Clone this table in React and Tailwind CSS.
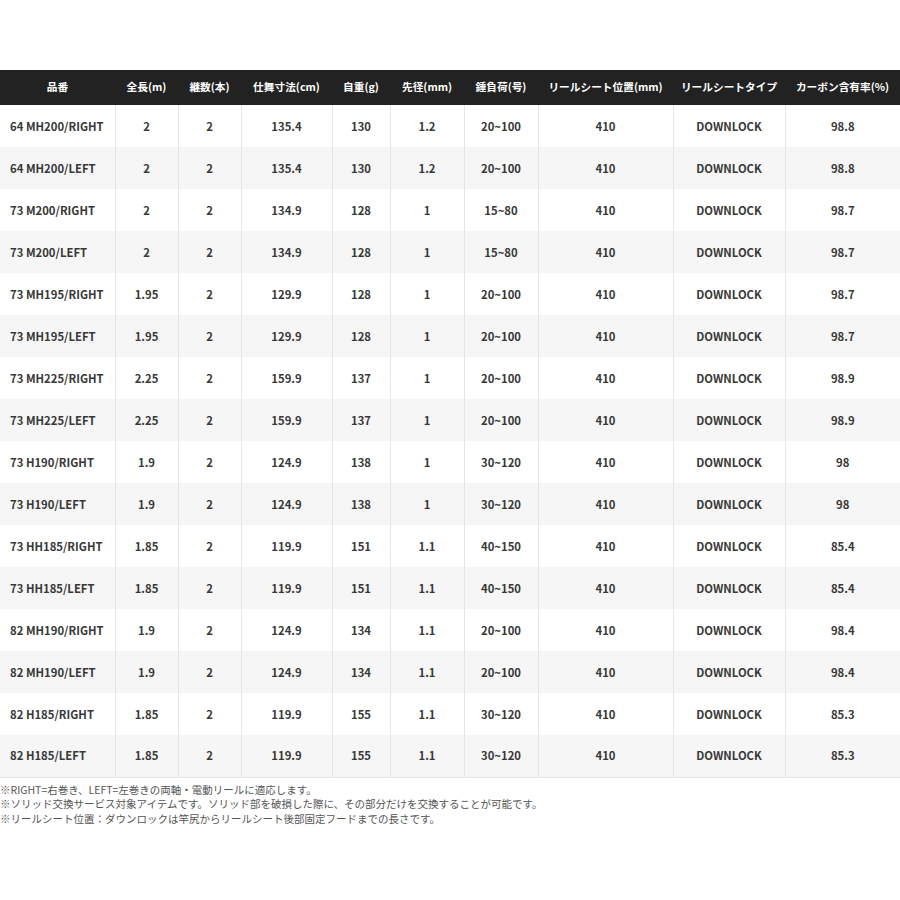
const columns = [
  { label: '品番', w: 'w-[115px]' },
  { label: '全長(m)', w: 'w-[63px]' },
  { label: '継数(本)', w: 'w-[63px]' },
  { label: '仕舞寸法(cm)', w: 'w-[91px]' },
  { label: '自重(g)', w: 'w-[58px]' },
  { label: '先径(mm)', w: 'w-[74px]' },
  { label: '錘負荷(号)', w: 'w-[74px]' },
  { label: 'リールシート位置(mm)', w: 'w-[135px]' },
  { label: 'リールシートタイプ', w: 'w-[112px]' },
  { label: 'カーボン含有率(%)', w: 'w-[115px]' },
];

const rows = [
  ['64 MH200/RIGHT', '2', '2', '135.4', '130', '1.2', '20~100', '410', 'DOWNLOCK', '98.8'],
  ['64 MH200/LEFT', '2', '2', '135.4', '130', '1.2', '20~100', '410', 'DOWNLOCK', '98.8'],
  ['73 M200/RIGHT', '2', '2', '134.9', '128', '1', '15~80', '410', 'DOWNLOCK', '98.7'],
  ['73 M200/LEFT', '2', '2', '134.9', '128', '1', '15~80', '410', 'DOWNLOCK', '98.7'],
  ['73 MH195/RIGHT', '1.95', '2', '129.9', '128', '1', '20~100', '410', 'DOWNLOCK', '98.7'],
  ['73 MH195/LEFT', '1.95', '2', '129.9', '128', '1', '20~100', '410', 'DOWNLOCK', '98.7'],
  ['73 MH225/RIGHT', '2.25', '2', '159.9', '137', '1', '20~100', '410', 'DOWNLOCK', '98.9'],
  ['73 MH225/LEFT', '2.25', '2', '159.9', '137', '1', '20~100', '410', 'DOWNLOCK', '98.9'],
  ['73 H190/RIGHT', '1.9', '2', '124.9', '138', '1', '30~120', '410', 'DOWNLOCK', '98'],
  ['73 H190/LEFT', '1.9', '2', '124.9', '138', '1', '30~120', '410', 'DOWNLOCK', '98'],
  ['73 HH185/RIGHT', '1.85', '2', '119.9', '151', '1.1', '40~150', '410', 'DOWNLOCK', '85.4'],
  ['73 HH185/LEFT', '1.85', '2', '119.9', '151', '1.1', '40~150', '410', 'DOWNLOCK', '85.4'],
  ['82 MH190/RIGHT', '1.9', '2', '124.9', '134', '1.1', '20~100', '410', 'DOWNLOCK', '98.4'],
  ['82 MH190/LEFT', '1.9', '2', '124.9', '134', '1.1', '20~100', '410', 'DOWNLOCK', '98.4'],
  ['82 H185/RIGHT', '1.85', '2', '119.9', '155', '1.1', '30~120', '410', 'DOWNLOCK', '85.3'],
  ['82 H185/LEFT', '1.85', '2', '119.9', '155', '1.1', '30~120', '410', 'DOWNLOCK', '85.3'],
];

const notes = [
  '※RIGHT=右巻き、LEFT=左巻きの両軸・電動リールに適応します。',
  '※ソリッド交換サービス対象アイテムです。ソリッド部を破損した際に、その部分だけを交換することが可能です。',
  '※リールシート位置：ダウンロックは竿尻からリールシート後部固定フードまでの長さです。',
];

const App = () => {
  return (
    <div className="w-[900px] h-[900px] bg-white pt-[70px] font-['Noto_Sans_CJK_JP','Noto_Sans',sans-serif]">
      <table className="w-[900px] table-fixed border-collapse">
        <colgroup>
          {columns.map((c) => (
            <col key={c.label} className={c.w} />
          ))}
        </colgroup>
        <thead>
          <tr className="h-[35px] bg-[#222222]">
            {columns.map((c) => (
              <th key={c.label} className="text-white text-[10.7px] font-bold text-center p-0 whitespace-nowrap">
                {c.label}
              </th>
            ))}
          </tr>
        </thead>
        <tbody>
          {rows.map((r, i) => (
            <tr key={i} className={'h-[42px] ' + (i % 2 === 1 ? 'bg-[#f6f6f6]' : 'bg-white')}>
              {r.map((v, j) => (
                <td
                  key={j}
                  className={
                    'p-0 text-[11.3px] font-bold text-[#383838] whitespace-nowrap border-[#e6e6e6] ' +
                    (j === 0 ? 'text-left pl-[10px] ' : 'text-center border-l ') +
                    (i === rows.length - 1 ? 'border-b' : '')
                  }
                >
                  {v}
                </td>
              ))}
            </tr>
          ))}
        </tbody>
      </table>
      <div className="pt-[5px] text-[10.5px] leading-[14.5px] text-[#555555]">
        {notes.map((n) => (
          <div key={n}>{n}</div>
        ))}
      </div>
    </div>
  );
};

export default App;
